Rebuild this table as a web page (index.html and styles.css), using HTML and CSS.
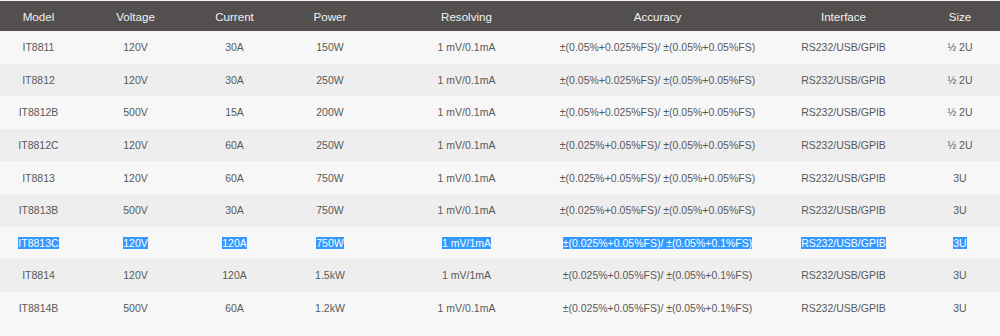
FILE: index.html
```html
<!DOCTYPE html>
<html>
<head>
<meta charset="utf-8">
<link rel="stylesheet" href="styles.css">
</head>
<body>
<table class="spec">
  <colgroup>
    <col class="c-model"><col class="c-volt"><col class="c-curr"><col class="c-pow">
    <col class="c-res"><col class="c-acc"><col class="c-if"><col class="c-size">
  </colgroup>
  <thead>
    <tr><th>Model</th><th>Voltage</th><th>Current</th><th>Power</th><th>Resolving</th><th>Accuracy</th><th>Interface</th><th>Size</th></tr>
  </thead>
  <tbody>
    <tr><td>IT8811</td><td>120V</td><td>30A</td><td>150W</td><td>1 mV/0.1mA</td><td>±(0.05%+0.025%FS)/ ±(0.05%+0.05%FS)</td><td>RS232/USB/GPIB</td><td>½ 2U</td></tr>
    <tr><td>IT8812</td><td>120V</td><td>30A</td><td>250W</td><td>1 mV/0.1mA</td><td>±(0.05%+0.025%FS)/ ±(0.05%+0.05%FS)</td><td>RS232/USB/GPIB</td><td>½ 2U</td></tr>
    <tr><td>IT8812B</td><td>500V</td><td>15A</td><td>200W</td><td>1 mV/0.1mA</td><td>±(0.05%+0.025%FS)/ ±(0.05%+0.05%FS)</td><td>RS232/USB/GPIB</td><td>½ 2U</td></tr>
    <tr><td>IT8812C</td><td>120V</td><td>60A</td><td>250W</td><td>1 mV/0.1mA</td><td>±(0.025%+0.05%FS)/ ±(0.05%+0.05%FS)</td><td>RS232/USB/GPIB</td><td>½ 2U</td></tr>
    <tr><td>IT8813</td><td>120V</td><td>60A</td><td>750W</td><td>1 mV/0.1mA</td><td>±(0.025%+0.05%FS)/ ±(0.05%+0.05%FS)</td><td>RS232/USB/GPIB</td><td>3U</td></tr>
    <tr><td>IT8813B</td><td>500V</td><td>30A</td><td>750W</td><td>1 mV/0.1mA</td><td>±(0.025%+0.05%FS)/ ±(0.05%+0.05%FS)</td><td>RS232/USB/GPIB</td><td>3U</td></tr>
    <tr><td><span class="sel">IT8813C</span></td><td><span class="sel">120V</span></td><td><span class="sel">120A</span></td><td><span class="sel">750W</span></td><td><span class="sel">1 mV/1mA</span></td><td><span class="sel">±(0.025%+0.05%FS)/ ±(0.05%+0.1%FS)</span></td><td><span class="sel">RS232/USB/GPIB</span></td><td><span class="sel">3U</span></td></tr>
    <tr><td>IT8814</td><td>120V</td><td>120A</td><td>1.5kW</td><td>1 mV/1mA</td><td>±(0.025%+0.05%FS)/ ±(0.05%+0.1%FS)</td><td>RS232/USB/GPIB</td><td>3U</td></tr>
    <tr><td>IT8814B</td><td>500V</td><td>60A</td><td>1.2kW</td><td>1 mV/0.1mA</td><td>±(0.025%+0.05%FS)/ ±(0.05%+0.1%FS)</td><td>RS232/USB/GPIB</td><td>3U</td></tr>
  </tbody>
</table>
</body>
</html>
```

FILE: styles.css
```css
html, body {
  margin: 0;
  padding: 0;
  background: #f7f7f7;
}
body {
  padding-top: 1px;
  font-family: "Liberation Sans", Arial, sans-serif;
}
.spec {
  width: 1000px;
  border-collapse: collapse;
  table-layout: fixed;
}
.c-model { width: 77px; }
.c-volt { width: 117px; }
.c-curr { width: 81px; }
.c-pow { width: 110px; }
.c-res { width: 163px; }
.c-acc { width: 219px; }
.c-if { width: 153px; }
.c-size { width: 80px; }

.spec th {
  background: #534f4f;
  color: #f2f2f2;
  font-weight: normal;
  font-size: 11.6px;
  height: 30px;
  padding: 0;
  text-align: center;
  vertical-align: middle;
}
.spec td {
  height: 32.6px;
  padding: 0;
  text-align: center;
  vertical-align: middle;
  font-size: 10.5px;
  color: #595959;
  white-space: nowrap;
}
.spec tbody tr:nth-child(odd) { background: #f7f7f7; }
.spec tbody tr:nth-child(even) { background: #eeeeee; }
.sel {
  background: #3399ff;
  color: #ffffff;
}
```
